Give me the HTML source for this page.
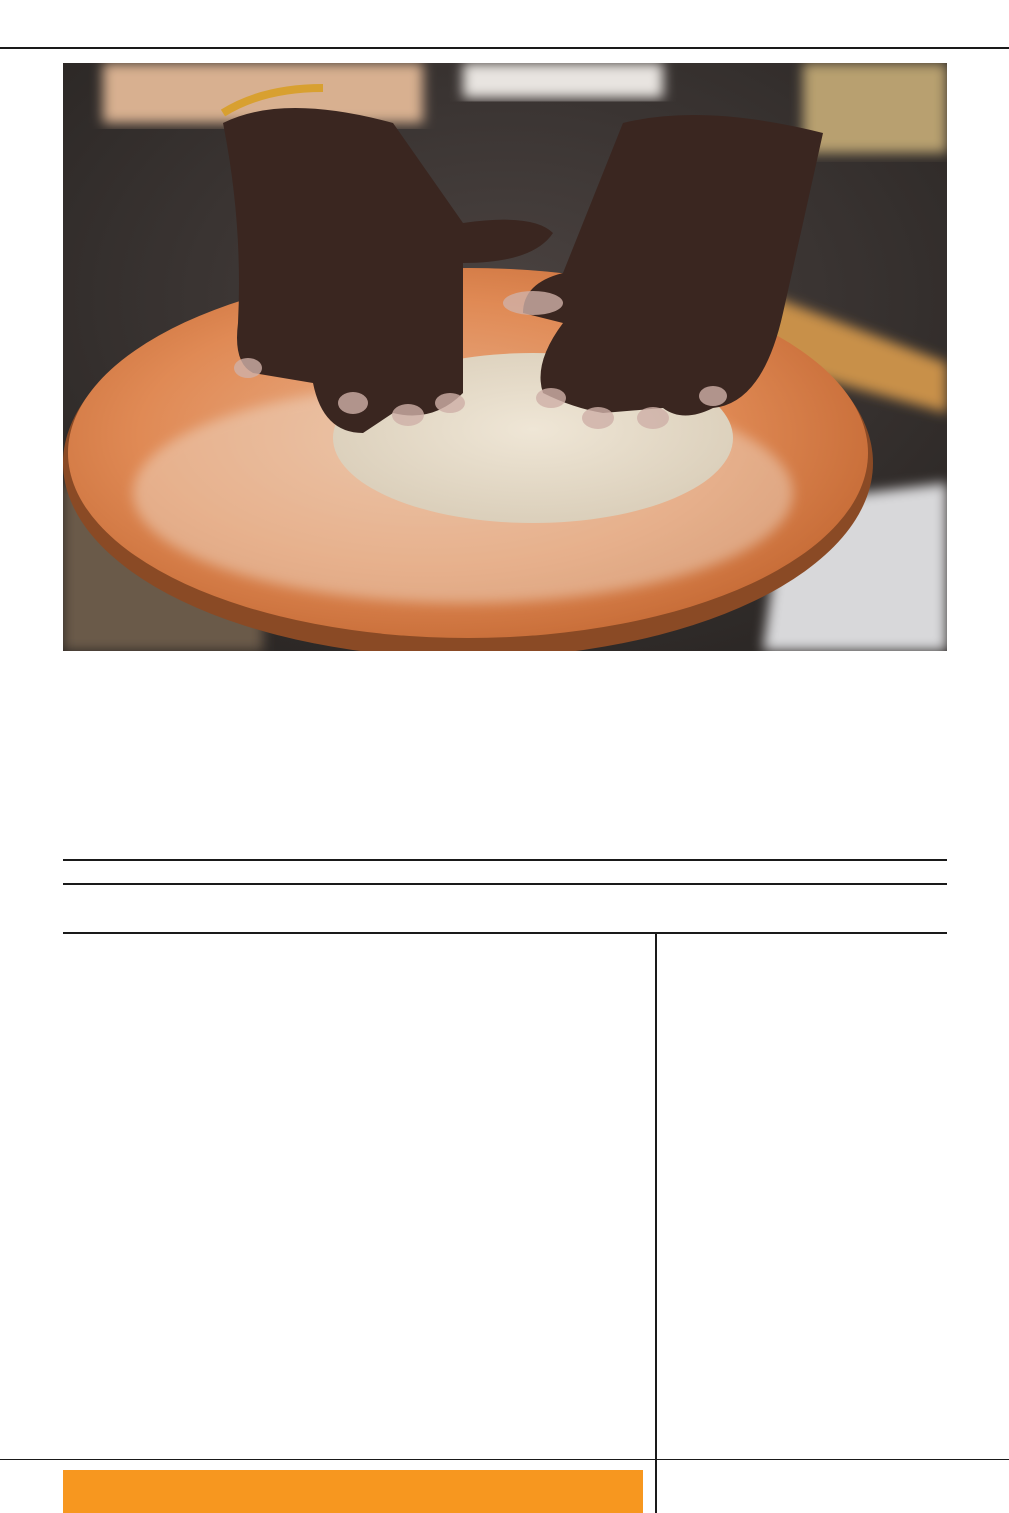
<!DOCTYPE html>
<html><head><meta charset="utf-8"><style>
html,body{margin:0;padding:0;background:#fff;}
body{width:1009px;height:1513px;position:relative;overflow:hidden;font-family:"Liberation Sans",sans-serif;}
.l{position:absolute;background:#1a1a1a;}
</style></head><body>
<div class="l" style="left:0;top:47px;width:1009px;height:2px"></div>
<svg style="position:absolute;left:63px;top:63px" width="884" height="588" viewBox="0 0 884 588">
<defs>
<radialGradient id="bg" cx="50%" cy="40%" r="70%"><stop offset="0" stop-color="#4a4240"/><stop offset="1" stop-color="#2a2624"/></radialGradient>
<radialGradient id="board" cx="45%" cy="45%" r="60%"><stop offset="0" stop-color="#e9b08a"/><stop offset="0.6" stop-color="#e08a55"/><stop offset="1" stop-color="#c56a35"/></radialGradient>
<radialGradient id="dough" cx="50%" cy="45%" r="60%"><stop offset="0" stop-color="#efe6d6"/><stop offset="1" stop-color="#d9cdb8"/></radialGradient>
<filter id="b"><feGaussianBlur stdDeviation="6"/></filter>
</defs>
<rect width="884" height="588" fill="url(#bg)"/>
<rect x="0" y="420" width="200" height="168" fill="#6b5a4a" filter="url(#b)"/>
<path d="M720 440 L884 420 L884 588 L700 588 Z" fill="#d8d8da" filter="url(#b)"/>
<rect x="40" y="0" width="320" height="60" fill="#d8b090" filter="url(#b)"/>
<rect x="740" y="0" width="144" height="90" fill="#b8a070" filter="url(#b)"/>
<rect x="400" y="0" width="200" height="35" fill="#e8e4e0" filter="url(#b)"/>
<path d="M700 230 L884 300 L884 350 L700 300 Z" fill="#c8904a" filter="url(#b)"/>
<ellipse cx="405" cy="400" rx="405" ry="195" fill="#8a4a25"/>
<ellipse cx="405" cy="390" rx="400" ry="185" fill="url(#board)"/>
<ellipse cx="400" cy="430" rx="330" ry="110" fill="#f0e0d0" opacity="0.45" filter="url(#b)"/>
<ellipse cx="470" cy="375" rx="200" ry="85" fill="url(#dough)"/>
<path d="M160 60 Q220 30 330 60 L400 160 Q470 150 490 170 Q470 200 400 200 L400 330 Q370 360 330 350 L300 370 Q260 370 250 320 L190 310 Q170 300 175 260 Q180 160 160 60 Z" fill="#3a2620"/>
<path d="M560 60 Q640 40 760 70 L720 250 Q700 340 650 345 Q620 360 600 345 L540 350 Q510 345 480 330 Q470 300 500 260 L460 250 Q460 220 500 210 Z" fill="#3a2620"/>
<g fill="#cfb0a8" opacity="0.8"><ellipse cx="185" cy="305" rx="14" ry="10"/><ellipse cx="290" cy="340" rx="15" ry="11"/><ellipse cx="345" cy="352" rx="16" ry="11"/><ellipse cx="387" cy="340" rx="15" ry="10"/><ellipse cx="488" cy="335" rx="15" ry="10"/><ellipse cx="535" cy="355" rx="16" ry="11"/><ellipse cx="590" cy="355" rx="16" ry="11"/><ellipse cx="650" cy="333" rx="14" ry="10"/><ellipse cx="470" cy="240" rx="30" ry="12"/></g>
<path d="M160 50 Q200 25 260 25" stroke="#d8a030" stroke-width="8" fill="none"/>
</svg>
<div class="l" style="left:63px;top:859px;width:884px;height:2px"></div>
<div class="l" style="left:63px;top:883px;width:884px;height:2px"></div>
<div class="l" style="left:63px;top:932px;width:884px;height:2px"></div>
<div class="l" style="left:655px;top:933px;width:2px;height:580px"></div>
<div class="l" style="left:0;top:1459px;width:1009px;height:1px"></div>
<div style="position:absolute;left:63px;top:1470px;width:580px;height:43px;background:#f7971f"></div>
</body></html>
